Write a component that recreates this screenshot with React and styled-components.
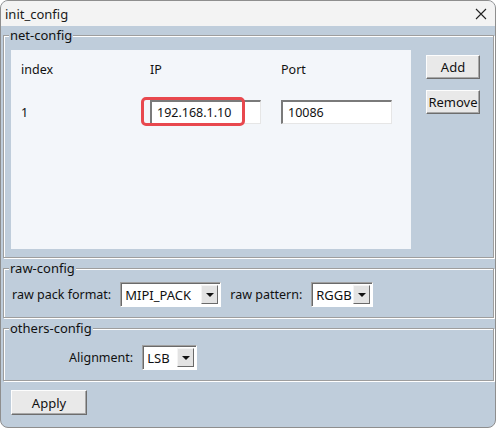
import React from "react"
import styled, {createGlobalStyle} from "styled-components"

const GlobalStyle = createGlobalStyle`
  html, body {
    margin: 0;
    padding: 0;
    background: #ffffff;
  }
  body {
    font-family: "Noto Sans", "Liberation Sans", sans-serif;
    font-size: 12.5px;
    color: #111;
  }
`

const Window = styled.div`
  width: 496px;
  height: 428px;
  box-sizing: border-box;
  border: 1px solid #8e8e8e;
  border-radius: 8px;
  overflow: hidden;
  display: flex;
  flex-direction: column;
  background: #bfcddb;
`

const TitleBar = styled.div`
  height: 25px;
  flex: none;
  display: flex;
  align-items: center;
  justify-content: space-between;
  padding: 0 8px 0 4px;
  background: #f3f3f3;
  font-size: 13px;
  color: #1a1a1a;
`

const CloseIcon = () => (
  <svg width="12" height="12" viewBox="0 0 12 12">
    <path d="M1 1 L11 11 M11 1 L1 11" stroke="#222" strokeWidth="1.1" fill="none"/>
  </svg>
)

const Body = styled.div`
  flex: 1;
  display: flex;
  flex-direction: column;
`

const Group = styled.fieldset`
  margin: ${p => p.$top || 1}px 1px 0 2px;
  padding: 0;
  border: 1px solid #9e9e9e;
  box-shadow: 1px 1px 0 #fff, inset 1px 1px 0 #fff;
  min-width: 0;
`

const Legend = styled.legend`
  margin-left: 5px;
  padding: 0 1px;
  line-height: 16px;
  font-size: 13px;
  background: #bfcddb;
  color: #111;
`

const NetContent = styled.div`
  display: flex;
  align-items: flex-start;
  gap: 15px;
  padding: 7px 0 8px 7px;
`

const ListPanel = styled.div`
  width: 400px;
  height: 199px;
  box-sizing: border-box;
  background: #f3f6fa;
  padding: 10px 0 0 10px;
`

const Grid = styled.div`
  display: grid;
  grid-template-columns: 129px 131px 111px;
  grid-template-rows: 18px 24px;
  row-gap: 22px;
  align-items: center;
`

const Cell = styled.div`
  position: relative;
  display: flex;
  align-items: center;
  height: 100%;
`

const TextBox = styled.div`
  width: 111px;
  height: 24px;
  box-sizing: border-box;
  display: flex;
  align-items: center;
  padding-left: 5px;
  background: #fff;
  border-style: solid;
  border-width: 2px 1px 1px 2px;
  border-color: #7a7a7a #e6e6e6 #e6e6e6 #7a7a7a;
  color: #111;
`

// red marker drawn around the IP field
const Highlight = styled.div`
  position: absolute;
  left: -9px;
  top: -3px;
  width: 104px;
  height: 29px;
  box-sizing: border-box;
  border: 3.5px solid #e8484e;
  border-radius: 5px;
  pointer-events: none;
`

const ButtonColumn = styled.div`
  display: flex;
  flex-direction: column;
  gap: 11px;
  padding-top: 5px;
`

const Button = styled.button`
  width: ${p => p.$width || 54}px;
  height: ${p => p.$height || 24}px;
  box-sizing: border-box;
  padding: 0;
  font-family: inherit;
  font-size: 13px;
  color: #111;
  background: #e9e9e9;
  border: 1px solid;
  border-color: #fdfdfd #6d6d6d #6d6d6d #fdfdfd;
  box-shadow: inset -1px -1px 0 #a8a8a8;
`

const Row = styled.div`
  display: flex;
  align-items: center;
  gap: ${p => p.$gap || 9}px;
  padding: ${p => p.$pad};
`

const Label = styled.span`
  font-size: 12.5px;
  color: #111;
`

const SelectBox = styled.div`
  width: ${p => p.$width}px;
  height: 25px;
  box-sizing: border-box;
  display: flex;
  align-items: center;
  justify-content: space-between;
  background: #fff;
  border: 1px solid;
  border-color: #a0a0a0 #fff #fff #a0a0a0;
  box-shadow: inset 1px 1px 0 #6a6a6a;
  padding: 2px 2px 2px 4px;
  font-size: 13px;
  color: #111;
`

const DropButton = styled.div`
  width: 17px;
  height: 19px;
  box-sizing: border-box;
  display: flex;
  align-items: center;
  justify-content: center;
  background: #e3e3e3;
  border: 1px solid;
  border-color: #f4f4f4 #6a6a6a #6a6a6a #f4f4f4;
`

const Arrow = styled.div`
  width: 0;
  height: 0;
  border-left: 4px solid transparent;
  border-right: 4px solid transparent;
  border-top: 4px solid #111;
`

const Select = ({value, width}) => (
  <SelectBox $width={width}>
    <span>{value}</span>
    <DropButton><Arrow/></DropButton>
  </SelectBox>
)

const Footer = styled.div`
  padding: 9px 0 0 10px;
`

export default function App() {
  return (
    <>
      <GlobalStyle/>
      <Window>
        <TitleBar>
          <span>init_config</span>
          <CloseIcon/>
        </TitleBar>
        <Body>
          <Group>
            <Legend>net-config</Legend>
            <NetContent>
              <ListPanel>
                <Grid>
                  <Cell>index</Cell>
                  <Cell>IP</Cell>
                  <Cell>Port</Cell>
                  <Cell>1</Cell>
                  <Cell>
                    <TextBox>192.168.1.10</TextBox>
                    <Highlight/>
                  </Cell>
                  <Cell>
                    <TextBox>10086</TextBox>
                  </Cell>
                </Grid>
              </ListPanel>
              <ButtonColumn>
                <Button>Add</Button>
                <Button>Remove</Button>
              </ButtonColumn>
            </NetContent>
          </Group>

          <Group $top={2}>
            <Legend>raw-config</Legend>
            <Row $pad="6px 0 10px 8px">
              <Label>raw pack format:</Label>
              <Select value="MIPI_PACK" width={101}/>
              <Label>raw pattern:</Label>
              <Select value="RGGB" width={62}/>
            </Row>
          </Group>

          <Group $top={2}>
            <Legend>others-config</Legend>
            <Row $pad="9px 0 10px 65px">
              <Label>Alignment:</Label>
              <Select value="LSB" width={55}/>
            </Row>
          </Group>

          <Footer>
            <Button $width={76} $height={25}>Apply</Button>
          </Footer>
        </Body>
      </Window>
    </>
  )
}
